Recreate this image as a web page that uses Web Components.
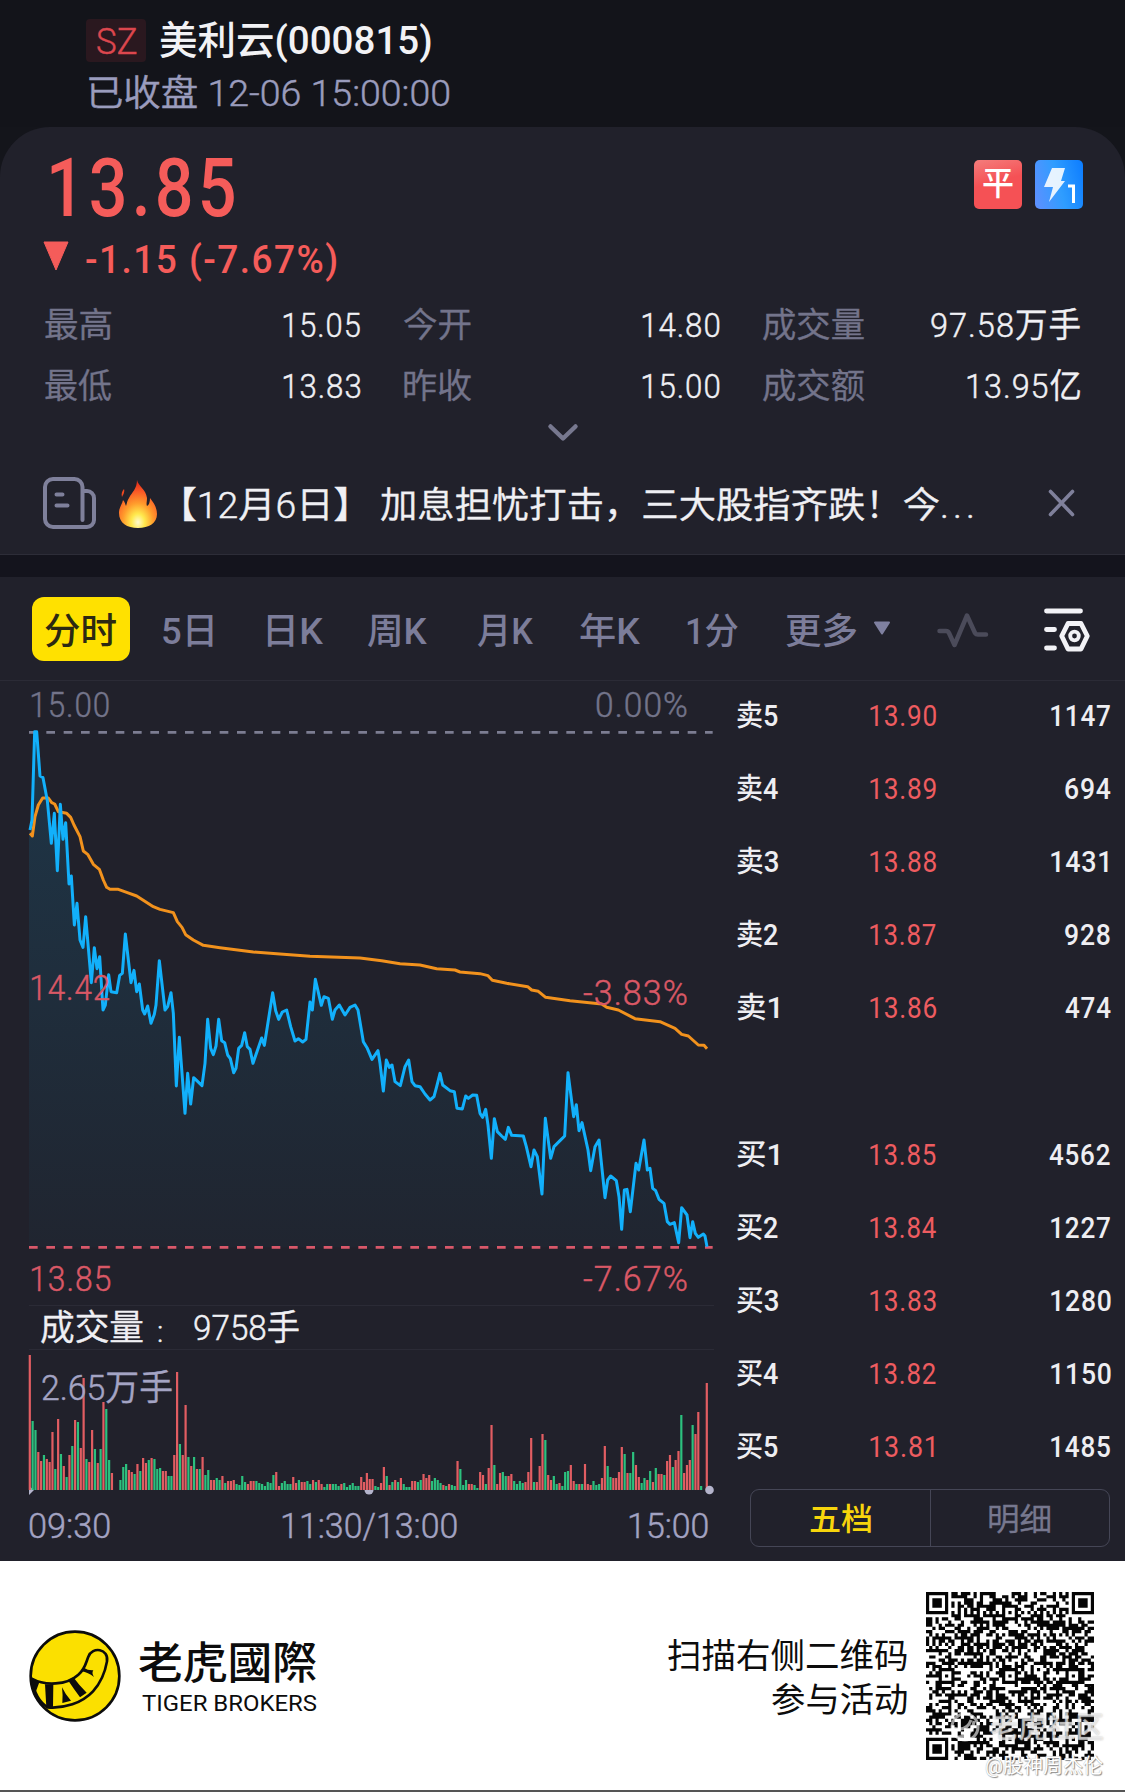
<!DOCTYPE html>
<html lang="zh-CN">
<head>
<meta charset="utf-8">
<title>美利云(000815)</title>
<style>
    body {
        margin: 0;
        width: 1125px;
        height: 1792px;
        overflow: hidden;
        background: #14151b;
        font-family: Roboto, "Noto Sans CJK SC", sans-serif;
    }
</style>
</head>
<body>
<stock-page></stock-page>

<script>
/**
 * Base class: attaches an open shadow root and fills it from template().
 */
class BaseElement extends HTMLElement {
    constructor() {
        super();
        this.attachShadow({ mode: 'open' });
    }

    connectedCallback() {
        this.render();
    }

    render() {
        this.shadowRoot.innerHTML = this.template();
    }
}

/**
 * FitText Component
 * One line of text squeezed horizontally so that its ink is exactly `w` px wide.
 */
class FitText extends BaseElement {
    template() {
        return `
            <style>
                :host { display: block; flex: none; height: 1em; line-height: 1em; white-space: nowrap; }
                span { display: inline-block; transform-origin: 0 50%; white-space: pre; }
            </style>
            <span><slot></slot></span>
        `;
    }

    render() {
        super.render();
        const width = Number(this.getAttribute('w'));
        const style = getComputedStyle(this);
        const ctx = document.createElement('canvas').getContext('2d');
        ctx.font = `${style.fontWeight} ${style.fontSize} ${style.fontFamily}`;
        if (style.letterSpacing !== 'normal') ctx.letterSpacing = style.letterSpacing;
        const m = ctx.measureText(this.textContent);
        const scale = width / (m.actualBoundingBoxRight + m.actualBoundingBoxLeft);
        this.style.width = width + 'px';
        const span = this.shadowRoot.querySelector('span');
        span.style.transform = `translate(${m.actualBoundingBoxLeft * scale}px, 1px) scaleX(${scale})`;
        // thin text gets a hairline outline so that it holds up on the dark ground
        if (style.fontWeight === '350') span.style.webkitTextStroke = '.45px';
    }
}

class QuoteHeader extends BaseElement {
    template() {
        return `
            <style>
                :host { display: flex; flex-direction: column; height: 127px; box-sizing: border-box; padding: 19px 0 0 86px; background: #13141a; }
                .row { display: flex; align-items: center; height: 43px; }
                .market { display: flex; align-items: center; justify-content: center; width: 60px; height: 43px; border-radius: 4px; background: #2a181f; color: #dc474e; font-size: 36px; font-weight: 350; }
                .name { margin-left: 14px; font-size: 39px; font-weight: 500; color: #f2f2f5; }
                .time { margin: 13px 0 0 3px; font-size: 36px; font-weight: 350; color: #9a9cbd; }
            </style>
            <div class="row">
                <div class="market"><fit-text w="39">SZ</fit-text></div>
                <fit-text class="name" w="271">美利云(000815)</fit-text>
            </div>
            <fit-text class="time" w="360">已收盘 12-06 15:00:00</fit-text>
        `;
    }
}

/**
 * StatItem Component
 * Muted label on the left, value on the right.
 */
class StatItem extends BaseElement {
    template() {
        const [label, labelW, value, valueW] = ['label', 'lw', 'value', 'vw'].map(a => this.getAttribute(a));
        return `
            <style>
                :host { display: flex; justify-content: space-between; align-items: center; font-size: 34px; font-weight: 350; }
                .label { color: #73748b; }
                .value { color: #f0f0f4; letter-spacing: .03em; }
            </style>
            <fit-text class="label" w="${labelW}">${label}</fit-text>
            <fit-text class="value" w="${valueW}">${value}</fit-text>
        `;
    }
}

class QuoteCard extends BaseElement {
    template() {
        return `
            <style>
                :host { display: block; height: 337px; background: #21212b; border-radius: 50px 50px 0 0; }
                .top { display: flex; justify-content: space-between; height: 107px; padding: 20px 42px 0 51px; }
                .price { font-size: 81px; font-weight: 500; letter-spacing: .06em; color: #f55c5a; }
                .badges { display: flex; gap: 13px; padding-top: 13px; }
                .badge { display: flex; width: 48px; height: 49px; border-radius: 5px; align-items: center; justify-content: center; }
                .flat { background: linear-gradient(165deg, #f47d7c, #f55155 45%); color: #fff; font-size: 33px; font-weight: 500; }
                .flat fit-text { margin-top: -5px; }
                .level { background: linear-gradient(75deg, #608fff, #2f9dff 50%, #0c7cff); }
                .change { display: flex; align-items: center; gap: 17px; height: 32px; margin: -11px 0 0 43px; color: #f55c5a; font-size: 38px; font-weight: 500; letter-spacing: .04em; }
                .change svg { margin-top: -6px; }
                .stats { display: grid; grid-template-columns: 315px 315px 317px; grid-auto-rows: 60.5px; gap: 0 44px; padding: 19px 0 0 45px; }
                .more { display: block; margin: 8px auto 0; }
            </style>
            <div class="top">
                <fit-text class="price" w="183">13.85</fit-text>
                <div class="badges">
                    <div class="badge flat"><fit-text w="30">平</fit-text></div>
                    <div class="badge level">
                        <svg width="48" height="49" viewBox="0 0 48 49">
                            <path d="M17 8h13l-4 13h4L14 42l4-15H9z" fill="#fff" fill-opacity=".88"/>
                            <path d="M33 26h5.500v17" fill="none" stroke="#fff" stroke-width="3"/>
                        </svg>
                    </div>
                </div>
            </div>
            <div class="change">
                <svg width="26" height="30" viewBox="0 0 26 30"><path d="M1 1h24L13 29z" fill="#f55c5a" stroke="#f55c5a" stroke-linejoin="round"/></svg>
                <fit-text w="250">-1.15 (-7.67%)</fit-text>
            </div>
            <div class="stats">
                <stat-item label="最高" lw="66" value="15.05" vw="77"></stat-item>
                <stat-item label="今开" lw="67" value="14.80" vw="77"></stat-item>
                <stat-item label="成交量" lw="101" value="97.58万手" vw="149"></stat-item>
                <stat-item label="最低" lw="66" value="13.83" vw="77"></stat-item>
                <stat-item label="昨收" lw="67" value="15.00" vw="77"></stat-item>
                <stat-item label="成交额" lw="101" value="13.95亿" vw="113"></stat-item>
            </div>
            <svg class="more" width="32" height="20" viewBox="0 0 32 20"><path d="M3.500 3.500L16 15.500 28.500 3.500" fill="none" stroke="#77788f" stroke-width="4.500" stroke-linecap="round" stroke-linejoin="round"/></svg>
        `;
    }
}

class NewsBar extends BaseElement {
    template() {
        return `
            <style>
                :host { display: flex; align-items: center; height: 90px; padding: 0 50px 0 43px; background: #21212b; border-bottom: 1px solid #2d2d38; }
                .flame { margin-left: 22px; }
                .text { margin: -7px 0 0 27px; font-size: 36.500px; color: #f0f0f4; font-weight: 350; }
                .dots { letter-spacing: 4px; }
                .close { margin-left: auto; }
            </style>
            <svg width="54" height="52" viewBox="0 0 54 52" fill="none" stroke="#7f809b" stroke-width="4" stroke-linecap="round" style="margin-top:-13px">
                <path d="M39.500 43V10a8 8 0 0 0-8-8H10a8 8 0 0 0-8 8v32a8 8 0 0 0 8 8h34a7 7 0 0 0 7-7V21a7 7 0 0 0-7-7h-4"/>
                <path d="M13.500 17.500h6M13.500 28.500h11"/>
            </svg>
            <svg class="flame" width="38" height="48" viewBox="0 0 38 48" style="margin-top:-11px">
                <defs>
                    <radialGradient id="fire" cx=".5" cy=".88" r=".8">
                        <stop offset="0" stop-color="#fffbd0"/><stop offset=".22" stop-color="#ffe94d"/>
                        <stop offset=".5" stop-color="#ff9c2c"/><stop offset=".8" stop-color="#fb5a26"/><stop offset="1" stop-color="#e8341c"/>
                    </radialGradient>
                </defs>
                <path d="M18 0c1 6 9 9 10 18 0 4-1 6 0 8 2-1 3-4 3-8 4 5 7 10 7 16 0 9-8 14-19 14S0 43 0 33c0-6 3-8 4-13 2 2 2 4 3 6 1-3 1-5 3-8 3-6 8-9 8-18z" fill="url(#fire)"/>
                <path d="M5 9c1 3-1 6-2 8-1-3 0-6 2-8z" fill="#f0481f"/>
            </svg>
            <fit-text class="text" w="780">【12月6日】 加息担忧打击，三大股指齐跌！今<span class="dots">...</span></fit-text>
            <svg class="close" width="27" height="28" viewBox="0 0 27 28" style="margin-top:-13px"><path d="M2.500 2.500l22 23M24.500 2.500l-22 23" stroke="#7f809b" stroke-width="3.600" stroke-linecap="round"/></svg>
        `;
    }
}

class ChartTabs extends BaseElement {
    template() {
        // [label, ink width, space before]
        const tabs = [['5日', 50, 33], ['日K', 55, 55], ['周K', 59, 45], ['月K', 56, 50], ['年K', 60, 47], ['1分', 51, 47], ['更多', 71, 48]];
        return `
            <style>
                :host { display: flex; align-items: center; height: 104px; box-sizing: border-box; padding: 1px 0 0 32px; border-bottom: 1px solid #2b2b36; font-size: 36px; font-weight: 500; color: #7c7d9a; }
                fit-text { position: relative; top: 2px; }
                .active { display: flex; align-items: center; justify-content: center; width: 98px; height: 64px; border-radius: 12px; background: #ffe100; color: #2c2912; }
                .active fit-text { margin-right: 1px; }
                .arrow { margin: -1px 0 0 16px; }
            </style>
            <div class="active"><fit-text w="71">分时</fit-text></div>
            ${tabs.map(([label, w, gap]) => `<fit-text w="${w}" style="margin-left:${gap}px">${label}</fit-text>`).join('')}
            <svg class="arrow" width="18" height="15" viewBox="0 0 18 15"><path d="M2 1.500h14L9 12.500z" fill="#7f80a0" stroke="#7f80a0" stroke-width="2" stroke-linejoin="round"/></svg>
            <svg width="52" height="38" viewBox="0 0 52 38" style="margin:2px 0 0 46px"><path d="M2.500 20H9q2 0 3 2l5.500 12L30 4.500 38 22q1 1.500 3 1.500h8" fill="none" stroke="#4b4b5a" stroke-width="4.500" stroke-linecap="round" stroke-linejoin="round"/></svg>
            <svg width="46" height="44" viewBox="0 0 46 44" style="margin:1px 0 0 55px" fill="none" stroke="#f2f2f6" stroke-width="4.800">
                <path d="M2.500 3h34M2.500 21.500h8M2.500 40h8" stroke-linecap="round"/>
                <path d="M24 15.500h13L43.300 28 37 41H24L17.700 28z" stroke-linejoin="round"/>
                <circle cx="30.500" cy="28" r="4.300" stroke-width="3.800"/>
            </svg>
        `;
    }
}

/**
 * PriceChart Component
 * Price (blue, filled) and average (orange) lines. Points are in thirds of a pixel.
 */
class PriceChart extends BaseElement {
    constructor() {
        super();
        this.price = `30,450 36,420 44,155 50,155 60,288 69,293 82,362 94,490 103,400 112,572 121,373 129,478 137,428 147,612 154,588
            163,735 171,670 180,780 189,802 197,710 214,908 223,803 231,866 239,830 249,990 256,975 266,884 273,935 290,938 299,886
            307,880 316,762 333,908 342,871 350,935 358,912 368,990 374,1002 383,978 393,1030 403,1003 408,975 418,842 435,990 443,980
            453,938 460,1000 469,1218 478,1072 495,1300 503,1180 512,1272 521,1193 546,1217 555,1150 563,1018 572,1105 580,1124 588,1098
            596,1018 605,1082 614,1088 623,1125 631,1136 641,1178 648,1165 656,1105 665,1096 674,1058 682,1100 690,1108 699,1150
            716,1100 725,1074 733,1096 742,1040 758,938 767,992 776,1018 787,996 800,990 812,1040 825,1083 835,1076 848,1086 858,1078
            870,966 877,990 886,898 904,976 912,950 925,955 937,1018 945,990 958,975 975,1005 990,982 1005,975 1014,990 1030,1085
            1042,1105 1056,1138 1074,1112 1080,1150 1090,1233 1099,1140 1108,1162 1116,1155 1125,1205 1141,1217 1155,1160 1166,1140
            1176,1205 1185,1217 1200,1220 1215,1242 1230,1260 1242,1250 1250,1220 1260,1180 1268,1215 1290,1232 1303,1235 1311,1285
            1327,1287 1337,1248 1345,1255 1358,1245 1370,1246 1380,1300 1388,1312 1397,1288 1404,1335 1414,1435 1423,1316 1432,1355
            1445,1368 1456,1378 1465,1342 1475,1366 1510,1368 1519,1400 1533,1460 1542,1410 1552,1430 1566,1542 1576,1315 1592,1435
            1602,1400 1620,1382 1634,1368 1644,1178 1661,1310 1669,1274 1677,1352 1686,1328 1704,1410 1712,1472 1725,1400 1737,1380
            1755,1553 1763,1500 1772,1488 1789,1502 1797,1550 1805,1648 1813,1530 1821,1528 1831,1595 1848,1450 1856,1470 1872,1380
            1882,1470 1890,1465 1898,1525 1907,1532 1917,1558 1932,1570 1942,1625 1950,1633 1963,1628 1976,1688 1985,1583 2001,1605
            2010,1673 2018,1625 2026,1660 2035,1672 2050,1662 2055,1668 2061,1700`;
        this.average = `30,460 37,468 45,410 55,375 68,354 85,354 95,368 104,372 115,395 140,400 152,412 162,435 180,470 190,513 203,523
            220,553 238,568 250,600 260,622 270,628 295,628 320,637 350,648 400,680 420,688 460,698 472,725 486,742 497,764 520,780
            550,796 600,803 700,816 780,822 870,829 1020,834 1085,842 1140,851 1200,855 1250,866 1305,870 1320,876 1380,881 1404,887
            1417,901 1460,910 1523,920 1535,930 1555,934 1577,952 1650,962 1745,972 1760,982 1795,990 1845,1016 1920,1025 1965,1045
            1985,1063 2005,1068 2035,1095 2052,1096 2061,1106`;
    }

    template() {
        return `
            <style>
                :host { display: block; position: relative; width: 692px; height: 624px; font-size: 35px; font-weight: 350; letter-spacing: .03em; color: #73748a; }
                svg { display: block; position: relative; top: -1px; }
                fit-text { position: absolute; }
                .down { color: #d95866; }
                .left { left: 12px; }
                .right { right: 25px; }
                .high { top: 6px; }
                .mid { top: 289px; }
                .low { top: 580px; }
            </style>
            <svg width="700" height="620" viewBox="0 0 2100 1860" fill="none" stroke-width="9" stroke-linejoin="round">
                <defs>
                    <linearGradient id="area" x1="0" y1="150" x2="0" y2="1702" gradientUnits="userSpaceOnUse">
                        <stop offset="0" stop-color="#1e3648"/><stop offset="1" stop-color="#202530"/>
                    </linearGradient>
                </defs>
                <path d="M27 157H2078" stroke="#7c7d92" stroke-width="8" stroke-dasharray="26 26"/>
                <polygon points="27,1702 27,460 ${this.price} 2061,1702" fill="url(#area)"/>
                <path d="M27 1702H2078" stroke="#d9586a" stroke-width="8" stroke-dasharray="26 26"/>
                <polyline points="${this.average}" stroke="#f2921d"/>
                <polyline points="${this.price}" stroke="#12b0fb"/>
            </svg>
            <fit-text class="left high" w="77">15.00</fit-text>
            <fit-text class="right high" w="90">0.00%</fit-text>
            <fit-text class="left mid down" w="77">14.42</fit-text>
            <fit-text class="right mid down" w="104" style="margin-top:5px">-3.83%</fit-text>
            <fit-text class="left low down" w="78">13.85</fit-text>
            <fit-text class="right low down" w="104">-7.67%</fit-text>
        `;
    }
}

/**
 * VolumeChart Component
 * One bar per minute: r = red, g = green, then the bar height in px.
 */
class VolumeChart extends BaseElement {
    constructor() {
        super();
        this.bars = `r135 g69 g60 r38 r29 g35 r31 r28 r58 g21 r71 g36 r24 g13 r35 g44 r70 g68 r42 r112 g31 r28 r60 g41 r27 g41 r88 g81
            g30 r17 r0 r0 g10 g23 g26 r20 r18 g16 r26 g19 r32 r27 g30 r32 g31 g21 g22 r19 r19 g14 g14 r35 r118 g46 r35 r85 g33 r24 g33
            r21 g21 r33 g15 g20 r10 r10 g12 g10 r14 g7 r9 r9 r10 g6 g5 g14 g8 r6 r9 r9 g9 g7 g6 g4 g8 g7 g15 r18 r4 g7 g9 g6 g6 r13 r7
            g10 r8 r8 g9 g6 r10 g8 r10 r6 g3 g6 r6 g6 g6 g4 r6 g7 g3 g5 g7 g4 g4 r13 r8 r17 r11 r11 g4 g3 r7 r23 g14 r5 g8 r10 g8 r12
            g6 g3 g3 r9 r9 g8 g10 r16 r12 r15 g9 g12 g10 g7 r5 g4 r6 g5 g4 r29 g21 g5 g10 r6 r6 g5 g2 r18 r15 g6 r22 r65 g25 r6 r17 g18
            g14 r14 r16 g9 g6 g9 g7 r8 r18 r52 g8 r8 r24 r56 g50 r15 r10 g14 g6 r7 g4 g18 g19 r25 r9 g6 r6 g6 r26 r6 r5 g9 g5 g6 r12
            r44 g24 g13 r12 r12 r18 r43 g36 r17 g17 g38 r25 r13 g7 g12 r10 g19 r8 g22 r16 r16 g15 r29 r35 g23 r30 r39 g75 r17 r25 r30
            g65 r56 r78 g4 r0 r107`.split(/\s+/);
    }

    template() {
        const step = 677 / (this.bars.length - 1);
        const rects = this.bars.map((bar, i) => {
            const h = Number(bar.slice(1));
            return `<rect x="${(i * step - .3).toFixed(2)}" y="${140 - h}" width="2.2" height="${h}" fill="${bar[0] === 'r' ? '#e25d62' : '#2cc07e'}"/>`;
        }).join('');
        return `
            <style>
                :host { display: block; width: 685px; margin-left: 29px; font-weight: 350; }
                .head { display: flex; align-items: center; height: 43px; padding-left: 12px; border: solid #2b2b36; border-width: 1px 0; font-size: 35px; color: #f0f0f4; }
                .colon { margin: 7px 32px 0 15px; font-size: 30px; }
                .plot { position: relative; height: 151px; }
                .plot svg { display: block; overflow: visible; }
                .peak { position: absolute; left: 13px; top: 20px; font-size: 35px; color: #a4a4c4; }
                .axis { display: flex; justify-content: space-between; padding: 7px 6px 0 1px; font-size: 35px; color: #a3a3c2; }
            </style>
            <div class="head">
                <fit-text w="102">成交量</fit-text>
                <fit-text class="colon" w="4">:</fit-text>
                <fit-text w="105">9758手</fit-text>
            </div>
            <div class="plot">
                <fit-text class="peak" w="130">2.65万手</fit-text>
                <svg width="683" height="150" viewBox="0 0 683 150">
                    <path d="M0 136l5 4-5 5z" fill="#b4b4cc"/>
                    ${rects}
                    <path d="M335.500 140a4.500 4.500 0 0 0 9 0z" fill="#b4b4cc"/>
                    <circle cx="680.500" cy="140" r="4.300" fill="#b4b4cc"/>
                </svg>
            </div>
            <div class="axis">
                <fit-text w="80">09:30</fit-text>
                <fit-text w="174">11:30/13:00</fit-text>
                <fit-text w="78">15:00</fit-text>
            </div>
        `;
    }
}

/**
 * OrderRow Component
 * Level label, price and quantity.
 */
class OrderRow extends BaseElement {
    template() {
        const qty = this.getAttribute('qty');
        // a leading or trailing 1 has less ink than the other digits
        const qtyWidth = qty.length * 15.5 - 1 - (qty.endsWith('1') ? 3 : 0) - (qty.startsWith('1') ? 1.5 : 0);
        const price = this.getAttribute('price');
        return `
            <style>
                :host { display: grid; grid-template-columns: 133px 1fr auto; align-items: center; height: 73.100px; font-size: 29px; font-weight: 500; color: #eeeef2; }
                .price { color: #ee5c60; font-weight: 400; letter-spacing: .03em; }
                .qty { letter-spacing: .03em; margin-right: ${qty.endsWith('1') ? 3 : 0}px; }
            </style>
            <fit-text w="41">${this.getAttribute('label')}</fit-text>
            <fit-text class="price" w="${price.endsWith('1') ? 64 : 66}">${price}</fit-text>
            <fit-text class="qty" w="${qtyWidth}">${qty}</fit-text>
        `;
    }
}

class OrderBook extends BaseElement {
    constructor() {
        super();
        this.asks = [['卖5', '13.90', '1147'], ['卖4', '13.89', '694'], ['卖3', '13.88', '1431'], ['卖2', '13.87', '928'], ['卖1', '13.86', '474']];
        this.bids = [['买1', '13.85', '4562'], ['买2', '13.84', '1227'], ['买3', '13.83', '1280'], ['买4', '13.82', '1150'], ['买5', '13.81', '1485']];
    }

    template() {
        const rows = list => list.map(([label, price, qty]) =>
            `<order-row label="${label}" price="${price}" qty="${qty}"></order-row>`).join('');
        return `
            <style>
                :host { display: flex; flex-direction: column; width: 373px; margin-left: auto; padding-right: 15px; }
                .asks { margin-top: -2px; }
                .bids { margin-top: 73px; }
                .switch { display: flex; width: 358px; height: 56px; margin: 6px 0 0 auto; border: 1px solid #454656; border-radius: 9px; font-size: 31px; }
                .switch div { flex: 1; display: flex; align-items: center; justify-content: center; }
                .switch fit-text { position: relative; top: 1px; }
                .on { color: #f7d50c; font-weight: 500; border-right: 1px solid #454656; }
                .off { color: #77788f; font-weight: 350; }
            </style>
            <div class="asks">${rows(this.asks)}</div>
            <div class="bids">${rows(this.bids)}</div>
            <div class="switch">
                <div class="on"><fit-text w="61">五档</fit-text></div>
                <div class="off"><fit-text w="61">明细</fit-text></div>
            </div>
        `;
    }
}

/**
 * QrCode Component
 * 53x53 modules with finder, alignment and timing patterns.
 */
class QrCode extends BaseElement {
    isDark(x, y, noise) {
        const n = 53;
        for (const [cx, cy] of [[3, 3], [n - 4, 3], [3, n - 4]]) {
            const d = Math.max(Math.abs(x - cx), Math.abs(y - cy));
            if (d <= 4) return d !== 2 && d !== 4;
        }
        for (const [cx, cy] of [[26, 6], [6, 26], [26, 26], [46, 26], [26, 46], [46, 46]]) {
            const d = Math.max(Math.abs(x - cx), Math.abs(y - cy));
            if (d <= 2) return d !== 1;
        }
        if (x === 6 || y === 6) return (x + y) % 2 === 0;
        return noise;
    }

    template() {
        let seed = 815;
        let d = '';
        for (let y = 0; y < 53; y++) {
            for (let x = 0; x < 53; x++) {
                seed = (seed * 1103515245 + 12345) % 2147483648;
                if (this.isDark(x, y, (seed >> 16) % 100 < 54)) d += `M${x} ${y}h1v1h-1z`;
            }
        }
        return `
            <style>
                :host { display: block; width: 168px; height: 168px; }
                svg { display: block; }
            </style>
            <svg width="168" height="168" viewBox="0 0 53 53"><path d="${d}" fill="#050505"/></svg>
        `;
    }
}

class ShareFooter extends BaseElement {
    template() {
        return `
            <style>
                :host { display: flex; position: relative; height: 229px; background: #fff; border-bottom: 2px solid #555; color: #0c0c0c; }
                .logo { margin: 69px 0 0 29px; }
                .brand { margin: 80px 0 0 18px; }
                .cn { font-size: 44px; font-weight: 500; font-family: Roboto, "Noto Sans CJK TC", sans-serif; }
                .en { margin: 7px 0 0 3px; font-size: 22px; }
                .invite { display: flex; flex-direction: column; align-items: flex-end; gap: 9px; margin: 77px 19px 0 auto; font-size: 34.500px; }
                qr-code { margin: 31px 31px 0 0; }
                .mark { position: absolute; right: 22px; display: flex; align-items: center; gap: 10px; color: rgba(255, 255, 255, .6); text-shadow: 0 0 2px rgba(150, 150, 150, .7); }
                .community { top: 151px; font-size: 29px; font-weight: 500; }
                .author { top: 194px; font-size: 20px; color: #fff; text-shadow: 1px 1px 1px #888, 0 0 1px #aaa; }
            </style>
            <svg class="logo" width="92" height="92" viewBox="0 0 276 276">
                <circle cx="138" cy="138" r="133" fill="#fbe000" stroke="#0c0c0c" stroke-width="8"/>
                <path d="M8 146c40 22 105 20 140-12 20-16 22-34 30-54 12-32 62-24 56 14-6 34-20 66-42 90-34 36-86 52-136 48-26-16-42-50-48-86z" fill="#fbe000" stroke="#0c0c0c" stroke-width="8" stroke-linejoin="round"/>
                <path d="M8 145l23 12-12 32zM48 163h25l-1 69H52zM99 172q9 20 27 40l-26 7q2-24-1-47zM117 151l16-9q18 25 40 46l-20 14q-18-24-36-51zM158 124l8-10q10 8 27 7-6 8 2 20-18-14-37-17z" fill="#0c0c0c"/>
            </svg>
            <div class="brand">
                <fit-text class="cn" lang="zh-Hant" w="177">老虎國際</fit-text>
                <fit-text class="en" w="175">TIGER BROKERS</fit-text>
            </div>
            <div class="invite">
                <fit-text w="239">扫描右侧二维码</fit-text>
                <fit-text w="135">参与活动</fit-text>
            </div>
            <qr-code></qr-code>
            <div class="mark community">
                <svg width="30" height="30" viewBox="0 0 30 30" fill="none" stroke="#fff" stroke-opacity=".6" stroke-width="3"><circle cx="15" cy="15" r="13"/><path d="M3 16q14 4 18-8M8 25q14 0 16-16"/></svg>
                <fit-text w="113">老虎社区</fit-text>
            </div>
            <div class="mark author"><fit-text w="117">@股神周杰伦</fit-text></div>
        `;
    }
}

class StockPage extends BaseElement {
    template() {
        return `
            <style>
                :host { display: block; width: 1125px; }
                .gap { height: 22px; background: #14141d; }
                .panel { height: 984px; background: #21212b; }
                .body { display: flex; }
                price-chart { margin-left: 20px; }
            </style>
            <quote-header></quote-header>
            <quote-card></quote-card>
            <news-bar></news-bar>
            <div class="gap"></div>
            <div class="panel">
                <chart-tabs></chart-tabs>
                <div class="body">
                    <div>
                        <price-chart></price-chart>
                        <volume-chart></volume-chart>
                    </div>
                    <order-book></order-book>
                </div>
            </div>
            <share-footer></share-footer>
        `;
    }
}

// Register Custom Elements
customElements.define('fit-text', FitText);
customElements.define('stat-item', StatItem);
customElements.define('quote-header', QuoteHeader);
customElements.define('quote-card', QuoteCard);
customElements.define('news-bar', NewsBar);
customElements.define('chart-tabs', ChartTabs);
customElements.define('price-chart', PriceChart);
customElements.define('volume-chart', VolumeChart);
customElements.define('order-row', OrderRow);
customElements.define('order-book', OrderBook);
customElements.define('qr-code', QrCode);
customElements.define('share-footer', ShareFooter);
customElements.define('stock-page', StockPage);
</script>
</body>
</html>
